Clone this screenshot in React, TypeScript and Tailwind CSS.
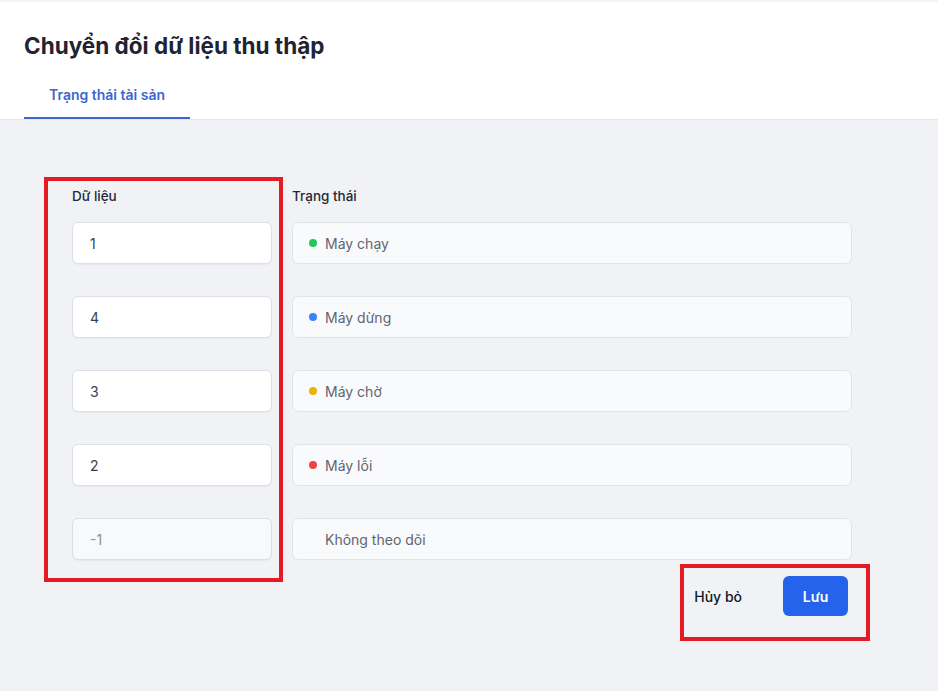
import React from "react";

const rows = [
  { value: "1", label: "Máy chạy", dot: "bg-[#22c55e]" },
  { value: "4", label: "Máy dừng", dot: "bg-[#3b82f6]" },
  { value: "3", label: "Máy chờ", dot: "bg-[#eab308]" },
  { value: "2", label: "Máy lỗi", dot: "bg-[#ef4444]" },
  { value: "-1", label: "Không theo dõi", dot: "" },
];

export default function App() {
  return (
    <div
      className="relative min-h-[691px] w-[938px] bg-[#f0f2f6] overflow-hidden"
      style={{ fontFamily: "Inter, 'Noto Sans', sans-serif" }}
    >
      <div className="h-[2px] bg-[#f3f4f6]" />
      <header className="bg-white border-b border-[#e3e6eb]">
        <h1 className="px-6 pt-[28px] text-[22.5px] leading-[32px] font-bold text-[#1f2430]">
          Chuyển đổi dữ liệu thu thập
        </h1>
        <div className="flex px-6 mt-[12px]">
          <div className="px-[25px] pt-[11px] pb-[12px] border-b-2 border-[#3b66d0] text-[14px] leading-5 font-semibold text-[#3b66d0]">
            Trạng thái tài sản
          </div>
        </div>
      </header>

      <main className="pl-[72px] pt-[66px] w-[852px]">
        <div className="flex gap-[20px]">
          <div className="w-[200px] text-[13.5px] leading-5 font-medium text-[#1f2937]">Dữ liệu</div>
          <div className="flex-1 text-[13.5px] leading-5 font-medium text-[#1f2937]">Trạng thái</div>
        </div>
        <div className="mt-4 flex flex-col gap-8">
          {rows.map((r) => {
            const muted = r.value === "-1";
            return (
              <div key={r.value} className="flex gap-[20px]">
                <div
                  className={`w-[200px] h-[42px] flex items-center pl-[17px] rounded-md border border-[#dcdfe5] shadow-[0_1px_1px_rgba(0,0,0,0.04)] text-[14px] ${
                    muted ? "bg-[#f8f9fb] text-[#8a8f98]" : "bg-white text-[#374151]"
                  }`}
                >
                  {r.value}
                </div>
                <div className="flex-1 h-[42px] flex items-center pl-[16px] gap-[8px] rounded-md border border-[#e1e4ea] bg-[#f9fafc] text-[14px] text-[#5f6570]">
                  <span className={`w-[8px] h-[8px] rounded-full ${r.dot}`} />
                  <span>{r.label}</span>
                </div>
              </div>
            );
          })}
        </div>
        <div className="mt-4 flex justify-end items-center pr-[4px]">
          <button className="mr-[41px] text-[14px] font-medium text-[#111827]">Hủy bỏ</button>
          <button className="h-[40px] w-[65px] rounded-md bg-[#2563eb] text-white text-[14px] font-semibold">
            Lưu
          </button>
        </div>
      </main>

      <div className="absolute left-[44px] top-[177px] w-[239px] h-[405px] border-[4px] border-[#e31b23] pointer-events-none" />
      <div className="absolute left-[680px] top-[564px] w-[190px] h-[77px] border-[4px] border-[#e31b23] pointer-events-none" />
    </div>
  );
}
